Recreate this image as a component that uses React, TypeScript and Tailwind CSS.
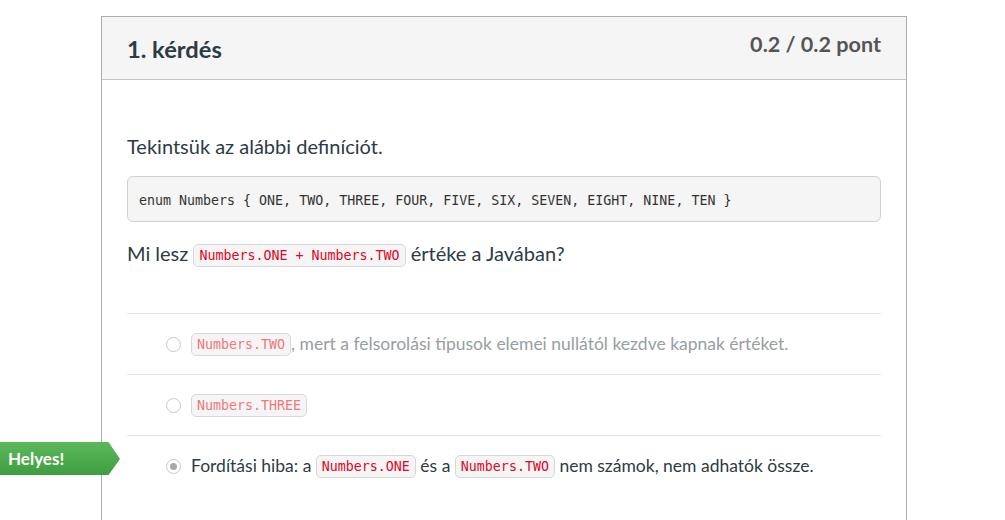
import React from "react";

const mono = "font-['DejaVu_Sans_Mono',monospace]";

function Code({ children, faded }: { children: React.ReactNode; faded?: boolean }) {
  return (
    <code
      className={`${mono} inline-block rounded-[5px] border border-[#d7d7d7] bg-[#f5f5f5] px-[5px] text-[13.3px] leading-[21px] align-[1px] ${
        faded ? "text-[#f0777f]" : "text-[#e0061f]"
      }`}
    >
      {children}
    </code>
  );
}

function Radio({ checked }: { checked?: boolean }) {
  return (
    <span className="mr-[10px] flex h-[15px] w-[15px] shrink-0 items-center justify-center rounded-full border border-[#c8c8c8] bg-white">
      {checked && <span className="h-[7px] w-[7px] rounded-full bg-[#a5a9ae]" />}
    </span>
  );
}

export default function App() {
  const answers = [
    {
      faded: true,
      content: (
        <>
          <Code faded>Numbers.TWO</Code>, mert a felsorolási típusok elemei nullától kezdve kapnak értéket.
        </>
      ),
    },
    {
      faded: true,
      content: <Code faded>Numbers.THREE</Code>,
    },
    {
      faded: false,
      checked: true,
      content: (
        <>
          Fordítási hiba: a <Code>Numbers.ONE</Code> és a <Code>Numbers.TWO</Code> nem számok, nem adhatók össze.
        </>
      ),
    },
  ];

  return (
    <div className="relative h-[520px] overflow-hidden bg-white font-['Lato',sans-serif] text-[#2d3b45]">
      <div className="ml-[101px] mt-4 w-[806px] border border-b-0 border-[#aeaeae]">
        {/* header */}
        <div className="flex h-[63px] items-start justify-between border-b border-[#c7c7c7] bg-[#f5f5f5] px-[25px]">
          <h2 className="pt-[17px] text-[23.7px] font-bold leading-[30px]">1. kérdés</h2>
          <div className="pt-[13px] text-[21.6px] font-bold leading-[28px] text-[#555555]">0.2 / 0.2 pont</div>
        </div>

        {/* body */}
        <div className="px-[25px] pb-10 pt-[52px]">
          <p className="text-[20px] leading-[28px]">Tekintsük az alábbi definíciót.</p>
          <pre
            className={`${mono} mt-[16px] rounded-[6px] border border-[#d0d0d0] bg-[#f5f5f5] px-[11px] pb-[10px] pt-[14px] text-[13.3px] leading-[20px] text-[#333]`}
          >
            enum Numbers {"{"} ONE, TWO, THREE, FOUR, FIVE, SIX, SEVEN, EIGHT, NINE, TEN {"}"}
          </pre>
          <p className="mt-[17px] text-[20px] leading-[28px]">
            Mi lesz <Code>Numbers.ONE + Numbers.TWO</Code> értéke a Javában?
          </p>

          <ul className="mt-[46px]">
            {answers.map((a, i) => (
              <li
                key={i}
                className={`flex h-[61px] items-center border-t border-[#e6e6e6] pl-[39px] text-[17.5px] ${
                  a.faded ? "text-[#979ea4]" : "text-[#2d3b45]"
                }`}
              >
                <Radio checked={a.checked} />
                <span>{a.content}</span>
              </li>
            ))}
          </ul>
        </div>
      </div>

      {/* correct answer badge */}
      <div className="absolute left-0 top-[442px] flex h-[33px] w-[120px]">
        <div className="flex h-full w-[108px] items-center bg-gradient-to-b from-[#5bb85b] to-[#3f9e3f] pl-2 text-[17px] font-bold text-white">
          Helyes!
        </div>
        <svg width="12" height="33" viewBox="0 0 12 33" className="block">
          <defs>
            <linearGradient id="g" x1="0" y1="0" x2="0" y2="1">
              <stop offset="0" stopColor="#5bb85b" />
              <stop offset="1" stopColor="#3f9e3f" />
            </linearGradient>
          </defs>
          <polygon points="0,0 0.5,0 12,17 0.5,33 0,33" fill="url(#g)" />
        </svg>
      </div>
    </div>
  );
}
